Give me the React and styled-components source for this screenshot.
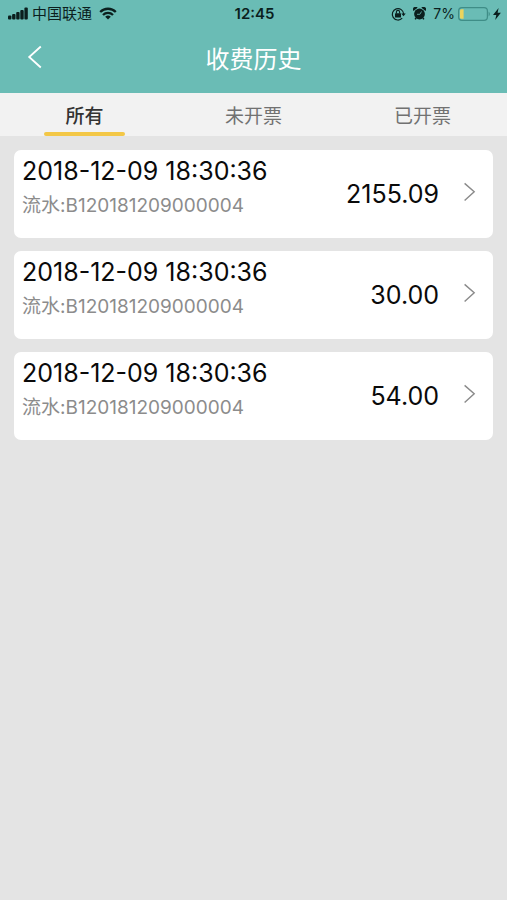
import { useState } from 'react';
import styled, { createGlobalStyle } from 'styled-components';

const GlobalStyle = createGlobalStyle`
  * {
    box-sizing: border-box;
  }
  body {
    margin: 0;
    background: #e4e4e4;
    font-family: Inter, 'Noto Sans CJK SC', sans-serif;
    color: #0a0a0a;
  }
  button {
    border: none;
    padding: 0;
    background: none;
    font: inherit;
    color: inherit;
    cursor: pointer;
  }
`;

const Header = styled.header`
  background: #6abcb5;
`;

const StatusBar = styled.div`
  display: grid;
  grid-template-columns: 1fr auto 1fr;
  align-items: center;
  height: 27px;
  padding: 0 6px 0 8px;
  font-size: 14px;
  line-height: 26px;
  color: #0b1f1e;
`;

const StatusGroup = styled.div`
  display: flex;
  align-items: center;
  justify-content: ${({ $end }) => ($end ? 'flex-end' : 'flex-start')};
  gap: ${({ $gap }) => $gap}px;
`;

const Carrier = styled.span`
  margin-right: 3px;
  font-size: 15px;
`;

const Clock = styled.time`
  font-size: 15px;
  font-weight: 600;
`;

const NavBar = styled.div`
  display: grid;
  grid-template-columns: 1fr auto 1fr;
  align-items: center;
  height: 66px;
  padding: 0 24px;
  color: #ffffff;
`;

const BackButton = styled.button`
  display: flex;
  align-items: center;
  justify-self: start;
  height: 44px;
  padding-bottom: 6px;
`;

const Title = styled.h1`
  margin: 0;
  font-size: 24px;
  font-weight: 400;
  line-height: 36px;
`;

const Tabs = styled.nav`
  display: flex;
  background: #f2f2f2;
`;

const Tab = styled.button`
  display: flex;
  flex: 1;
  flex-direction: column;
  align-items: center;
  padding-top: 8px;
  font-size: 19px;
  line-height: 31px;
  font-weight: ${({ $active }) => ($active ? 500 : 400)};
  color: ${({ $active }) => ($active ? '#333333' : '#717171')};
`;

const Underline = styled.span`
  width: 48%;
  height: 4px;
  border-radius: 2px;
  background: ${({ $active }) => ($active ? '#f3c746' : 'transparent')};
`;

const List = styled.ul`
  display: flex;
  flex-direction: column;
  gap: 13px;
  margin: 0;
  padding: 14px;
  list-style: none;
`;

const Card = styled.li`
  border-radius: 7px;
  background: #ffffff;
`;

const CardButton = styled.button`
  display: flex;
  align-items: center;
  width: 100%;
  height: 88px;
  padding: 0 16px 0 8px;
  text-align: left;
`;

const Info = styled.div`
  flex: 1;
  align-self: flex-start;
  padding-top: 4px;
`;

const DateText = styled.div`
  font-size: 25px;
  line-height: 35px;
`;

const Serial = styled.div`
  font-size: 19px;
  line-height: 34px;
  color: #8c8c8c;
`;

const Amount = styled.div`
  margin-right: 24px;
  font-size: 25px;
  line-height: 36px;
`;

const Arrow = styled.svg`
  margin-bottom: 4px;
`;

const SignalIcon = () => (
  <svg width="20" height="13" viewBox="0 0 20 13" fill="currentColor" aria-hidden="true">
    <rect x="0" y="8.4" width="3.4" height="4" rx="1" />
    <rect x="4.1" y="7" width="3.4" height="5.4" rx="1" />
    <rect x="8.2" y="5" width="3.4" height="7.4" rx="1" />
    <rect x="12.3" y="3" width="3.4" height="9.4" rx="1" />
    <rect x="16.4" y="0.6" width="3.4" height="11.8" rx="1" />
  </svg>
);

const WifiIcon = () => (
  <svg width="18" height="13" viewBox="0 0 18 13" aria-hidden="true">
    <g fill="none" stroke="currentColor" strokeWidth="2.3">
      <path d="M1.2 5A11 11 0 0 1 16.8 5" />
      <path d="M4 8A7 7 0 0 1 14 8" />
    </g>
    <path d="M6.2 9.8a4 4 0 0 1 5.6 0L9 12.6z" fill="currentColor" />
  </svg>
);

const LockIcon = () => (
  <svg width="15" height="14" viewBox="0 0 15 14" aria-hidden="true">
    <path d="M11.2 11.2A5.7 5.7 0 1 1 12.7 7" fill="none" stroke="currentColor" strokeWidth="1.2" />
    <path d="M10.3 6.4h4.4l-2.2 2.9z" fill="currentColor" />
    <rect x="4" y="6.2" width="6" height="4.2" rx="0.5" fill="currentColor" />
    <path d="M5.4 6.4V5a1.6 1.6 0 0 1 3.2 0v1.4" fill="none" stroke="currentColor" strokeWidth="1.1" />
  </svg>
);

const AlarmIcon = () => (
  <svg width="13" height="13" viewBox="0 0 13 13" aria-hidden="true">
    <g fill="currentColor">
      <circle cx="6.5" cy="7" r="5.4" />
      <path d="M0.4 4A2.4 2.4 0 0 1 4.6 0.8z" />
      <path d="M12.6 4A2.4 2.4 0 0 0 8.4 0.8z" />
      <path d="M2.2 10.4l1.6 1-1 1.3-1.2-.8z" />
      <path d="M10.8 10.4l-1.6 1 1 1.3 1.2-.8z" />
    </g>
    <path d="M4 7.3h2.9l1.6-2.8" fill="none" stroke="#6abcb5" strokeWidth="0.8" />
  </svg>
);

const BatteryIcon = () => (
  <svg width="33" height="14" viewBox="0 0 33 14" aria-hidden="true">
    <rect x="0.6" y="0.6" width="28.8" height="12.8" rx="3.4" fill="none" stroke="#3f8d87" strokeWidth="1.2" />
    <path d="M30.6 4.6q2.6 2.4 0 4.8z" fill="#3f8d87" />
    <path d="M5.6 2.2v9.6H3.6Q2 11.8 2 10.4V3.6Q2 2.2 3.6 2.2z" fill="#ecd45c" />
  </svg>
);

const BoltIcon = () => (
  <svg width="8" height="12" viewBox="0 0 8 12" fill="currentColor" aria-hidden="true">
    <path d="M5.6 0L0 6.9h3.3L2.2 12l5.7-7.2H4.6z" />
  </svg>
);

const BackIcon = () => (
  <svg width="20" height="24" viewBox="0 0 20 24" fill="none" stroke="currentColor" strokeWidth="1.8" aria-hidden="true">
    <path d="M16.8 1.5L5.2 12l11.6 10.5" />
  </svg>
);

const ArrowIcon = () => (
  <Arrow width="14" height="20" viewBox="0 0 14 20" fill="none" stroke="#8a8a8a" strokeWidth="1.4" aria-hidden="true">
    <path d="M1.6 1.4l9.6 8.4-9.6 8.6" />
  </Arrow>
);

const TABS = ['所有', '未开票', '已开票'];

const RECORDS = [
  { id: 1, date: '2018-12-09 18:30:36', serial: 'B120181209000004', amount: '2155.09' },
  { id: 2, date: '2018-12-09 18:30:36', serial: 'B120181209000004', amount: '30.00' },
  { id: 3, date: '2018-12-09 18:30:36', serial: 'B120181209000004', amount: '54.00' },
];

const App = () => {
  const [active, setActive] = useState(0);

  return (
    <>
      <GlobalStyle />
      <Header>
        <StatusBar>
          <StatusGroup $gap={4}>
            <SignalIcon />
            <Carrier>中国联通</Carrier>
            <WifiIcon />
          </StatusGroup>
          <Clock>12:45</Clock>
          <StatusGroup $end $gap={7}>
            <LockIcon />
            <AlarmIcon />
            <StatusGroup $gap={3}>
              <span>7%</span>
              <StatusGroup $gap={2}>
                <BatteryIcon />
                <BoltIcon />
              </StatusGroup>
            </StatusGroup>
          </StatusGroup>
        </StatusBar>
        <NavBar>
          <BackButton aria-label="返回">
            <BackIcon />
          </BackButton>
          <Title>收费历史</Title>
        </NavBar>
      </Header>
      <Tabs>
        {TABS.map((label, index) => (
          <Tab key={label} $active={index === active} onClick={() => setActive(index)}>
            {label}
            <Underline $active={index === active} />
          </Tab>
        ))}
      </Tabs>
      <List>
        {RECORDS.map(({ id, date, serial, amount }) => (
          <Card key={id}>
            <CardButton>
              <Info>
                <DateText>{date}</DateText>
                <Serial>流水:{serial}</Serial>
              </Info>
              <Amount>{amount}</Amount>
              <ArrowIcon />
            </CardButton>
          </Card>
        ))}
      </List>
    </>
  );
};

export default App;
